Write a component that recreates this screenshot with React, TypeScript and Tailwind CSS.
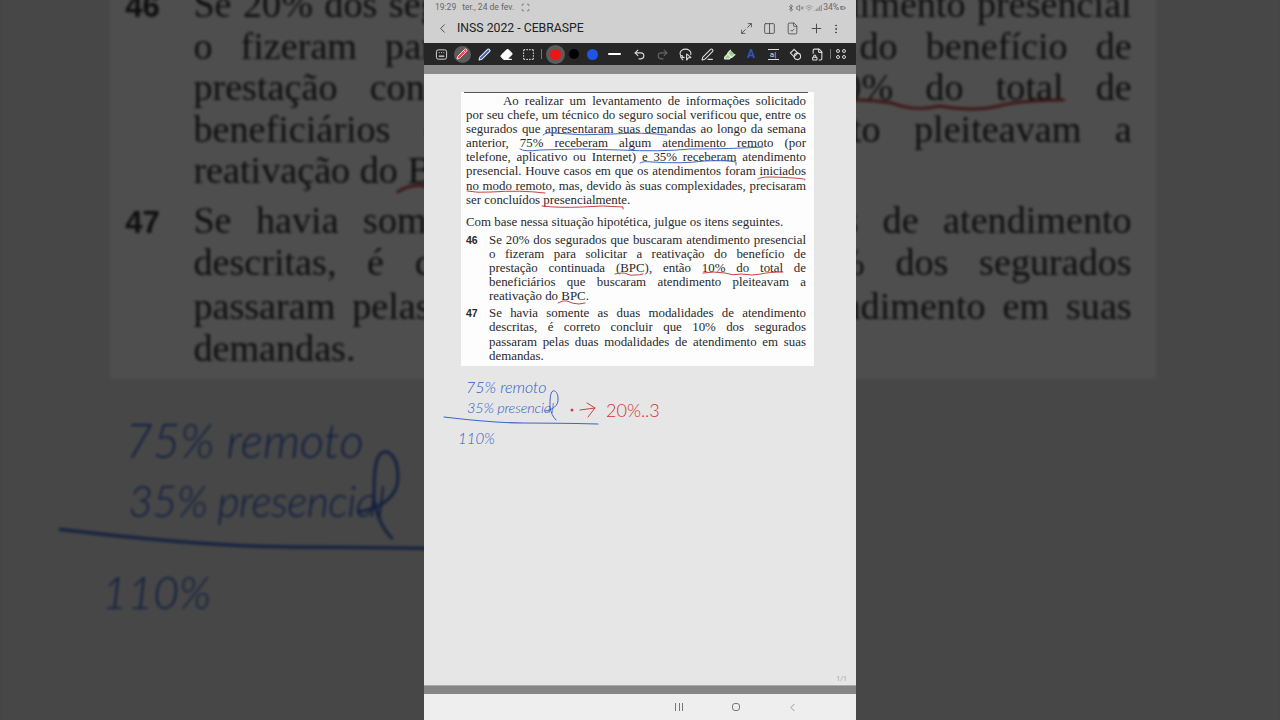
import {
  BatteryMedium,
  Bluetooth,
  ChevronLeft,
  Columns2,
  EllipsisVertical,
  Eraser,
  FileCheck,
  FileLock2,
  Highlighter,
  LassoSelect,
  Maximize2,
  PenLine,
  Pen,
  Pencil,
  Plus,
  Redo2,
  Scan,
  Signal,
  SquareDashed,
  Undo2,
  VolumeX,
  Wifi,
} from "lucide-react";

const serif = "font-['Liberation_Serif',serif]";

const intro = [
  "por seu chefe, um técnico do seguro social verificou que, entre os",
  "segurados que apresentaram suas demandas ao longo da semana",
  "anterior, 75% receberam algum atendimento remoto (por",
  "telefone, aplicativo ou Internet) e 35% receberam atendimento",
  "presencial. Houve casos em que os atendimentos foram iniciados",
  "no modo remoto, mas, devido às suas complexidades, precisaram",
];

const q46 = [
  "Se 20% dos segurados que buscaram atendimento presencial",
  "o fizeram para solicitar a reativação do benefício de",
  "prestação continuada (BPC), então 10% do total de",
  "beneficiários que buscaram atendimento pleiteavam a",
];

const q47 = [
  "Se havia somente as duas modalidades de atendimento",
  "descritas, é correto concluir que 10% dos segurados",
  "passaram pelas duas modalidades de atendimento em suas",
];

function Line({ text }: { text: string }) {
  return <div className="text-justify [text-align-last:justify]">{text}</div>;
}

// the printed question, same block is reused blown up behind the phone
function Sheet() {
  return (
    <div className="relative h-[611px] w-[432px] bg-[#e6e6e6] pl-[37px] pt-[18px]">
      <div className={`h-[274px] w-[353px] bg-[#fdfdfd] pl-[5px] pr-[8px] ${serif} text-[12.9px] leading-[14.1px] text-[#2a2a2a]`}>
        <div className="mx-[-2px] mb-[1px] h-[1px] bg-[#555]" />
        <div className="pl-[37px]">
          <Line text="Ao realizar um levantamento de informações solicitado" />
        </div>
        {intro.map((t) => (
          <Line key={t} text={t} />
        ))}
        <div>ser concluídos presencialmente.</div>
        <div className="mt-[8px]">Com base nessa situação hipotética, julgue os itens seguintes.</div>
        <div className="mt-[4px] flex">
          <b className="w-[23px] font-['Liberation_Sans',sans-serif] text-[10.5px]">46</b>
          <div className="flex-1">
            {q46.map((t) => (
              <Line key={t} text={t} />
            ))}
            <div>reativação do BPC.</div>
          </div>
        </div>
        <div className="mt-[3px] flex">
          <b className="w-[23px] font-['Liberation_Sans',sans-serif] text-[10.5px]">47</b>
          <div className="flex-1">
            {q47.map((t) => (
              <Line key={t} text={t} />
            ))}
            <div>demandas.</div>
          </div>
        </div>
      </div>
      <Ink />
    </div>
  );
}

// pen strokes on the page; the viewBox uses the coordinates of the full screenshot
function Ink() {
  return (
    <>
      <svg
        viewBox="424 74 432 611"
        className="absolute inset-0 h-[611px] w-[432px]"
        fill="none"
        strokeLinecap="round"
        strokeLinejoin="round"
      >
        <g stroke="#3d66c6" strokeWidth="1">
          <path d="M543 135q3-3 10-2 30 3 60 1t54 1" />
          <path d="M520 149q4 3 20 1 40-2 80 0t70-1q40 0 73-2" />
          <path d="M640 163q3-2 12-1 30 2 52-1 24-1 32 1v3" />
          <path d="M444 417q50 6 80 6t74 1" strokeWidth="1.1" />
          <path d="M545 411C552 410 559 406 558 398C558 393 555 390 553 391C550 392 550 400 550 407C551 413 553 417 556 420" />
        </g>
        <g stroke="#c8423f" strokeWidth="1">
          <path d="M758 179q2-2 12-2t24 1 11 2" />
          <path d="M467 191q10 2 24 1 30-2 54 1" />
          <path d="M542 206q16 2 40 1 20-2 41 0v2" />
          <path d="M615 274q8-2 12 0t8 1q5 0 8-1" />
          <path d="M703 273q10-2 22 0 8 3 16 1 12 2 20 0t22-2" />
          <path d="M558 303q5-3 9-2 6 3 12 3l6-1" />
          <path d="M580 410l15-2M587 403l8 5-7 9" />
        </g>
        <circle cx="572" cy="410" r="1.5" fill="#c8423f" />
      </svg>
      <div className="absolute left-[42px] top-[305px] font-['Lato',sans-serif] text-[16px] font-light italic leading-[16px] text-[#2f5cc9]">
        75% remoto
      </div>
      <div className="absolute left-[43px] top-[326px] font-['Lato',sans-serif] text-[14.5px] font-light italic leading-[16px] tracking-[-0.2px] text-[#2f5cc9]">
        35% presencial
      </div>
      <div className="absolute left-[34px] top-[356px] font-['Lato',sans-serif] text-[15px] font-light italic leading-[16px] text-[#2f5cc9]">
        110%
      </div>
      <div className="absolute left-[182px] top-[326px] font-['Lato',sans-serif] text-[18px] font-light leading-[20px] text-[#cf3530]">
        20%..3
      </div>
    </>
  );
}

function ToolIcon({ children }: { children: React.ReactNode }) {
  return <div className="flex h-[22px] w-[22px] items-center justify-center">{children}</div>;
}

function Toolbar() {
  const ic = "h-[13px] w-[13px] text-[#dcdcdc]";
  return (
    <div className="flex h-[22px] items-center bg-[#262626] pl-[6px]">
      <ToolIcon>
        <svg viewBox="0 0 14 14" className="h-[13px] w-[13px]" fill="none" stroke="#dcdcdc">
          <rect x="1.5" y="2" width="11" height="10" rx="2" />
          <path d="M4 8.8h6" strokeWidth="1.4" />
          <path d="M4 5h6" strokeDasharray="1 1.5" />
        </svg>
      </ToolIcon>
      <div className="ml-[-1px]">
        <ToolIcon>
          <div className="flex h-[17px] w-[17px] items-center justify-center rounded-full bg-[#5c5c5c]">
            <Pencil className="h-[12px] w-[12px] fill-[#f04545] text-[#f8dcdc]" />
          </div>
        </ToolIcon>
      </div>
      <ToolIcon>
        <Pen className="h-[13px] w-[13px] fill-[#3f5fb5] text-[#dfe6f5]" />
      </ToolIcon>
      <ToolIcon>
        <Eraser className="h-[13px] w-[13px] fill-white text-white" />
      </ToolIcon>
      <ToolIcon>
        <SquareDashed className={ic} />
      </ToolIcon>
      <div className="ml-[2px] h-[10px] w-[1px] bg-[#777]" />
      <div className="ml-[4px] flex h-[19px] w-[19px] items-center justify-center rounded-full bg-[#5c5c5c]">
        <div className="h-[11px] w-[11px] rounded-full bg-[#f01414]" />
      </div>
      <div className="ml-[1px] flex h-[16px] w-[16px] items-center justify-center">
        <div className="h-[10px] w-[10px] rounded-full bg-black" />
      </div>
      <div className="ml-[2px] flex h-[16px] w-[16px] items-center justify-center">
        <div className="h-[11px] w-[11px] rounded-full bg-[#1f55e6]" />
      </div>
      <div className="ml-[8px] h-[2px] w-[13px] rounded-full bg-white" />
      <div className="ml-[7px] flex w-[45px] items-center justify-between">
        <ToolIcon>
          <Undo2 className={ic} />
        </ToolIcon>
        <ToolIcon>
          <Redo2 className="h-[13px] w-[13px] text-[#666]" />
        </ToolIcon>
      </div>
      <div className="ml-[1px] flex">
        <ToolIcon>
          <LassoSelect className={ic} />
        </ToolIcon>
        <ToolIcon>
          <PenLine className={ic} />
        </ToolIcon>
        <ToolIcon>
          <Highlighter className="h-[13px] w-[13px] fill-[#9fd08a] text-[#eef5e6]" />
        </ToolIcon>
        <ToolIcon>
          <span className="font-['Roboto',sans-serif] text-[12px] font-bold text-[#2f55c8]">A</span>
        </ToolIcon>
        <ToolIcon>
          <span className="w-[11px] border-y border-[#dcdcdc] text-center font-['Roboto',sans-serif] text-[8px] leading-[9px] text-[#dcdcdc]">
            a|
          </span>
        </ToolIcon>
        <ToolIcon>
          <svg viewBox="0 0 14 14" className="h-[13px] w-[13px]" fill="none" stroke="#dcdcdc" strokeWidth="1.2">
            <path d="M5.5 1.5l4 4-4 4-4-4z" />
            <circle cx="9" cy="9" r="3.5" />
          </svg>
        </ToolIcon>
        <ToolIcon>
          <FileLock2 className={ic} />
        </ToolIcon>
      </div>
      <div className="ml-[2px] h-[10px] w-[1px] bg-[#777]" />
      <div className="ml-[3px] flex h-[22px] w-[14px] items-center justify-center">
        <div className="grid grid-cols-2 gap-[2px]">
          <div className="h-[4px] w-[4px] rounded-full border border-[#dcdcdc]" />
          <div className="h-[4px] w-[4px] rounded-full border border-[#dcdcdc]" />
          <div className="h-[4px] w-[4px] rounded-full border border-[#dcdcdc]" />
          <div className="h-[4px] w-[4px] rounded-full border border-[#dcdcdc]" />
        </div>
      </div>
    </div>
  );
}

export default function App() {
  return (
    <div className="relative h-[720px] w-[1280px] overflow-hidden bg-[#454545]">
      {/* blurred backdrop: the same page scaled up */}
      <div className="absolute left-[1px] top-[-486px] origin-top-left scale-[2.96] blur-[0.6px] brightness-[0.31]">
        <Sheet />
      </div>

      <div className="relative flex h-full justify-center">
        <div className="flex h-full w-[432px] flex-col">
          <div className="flex h-[14px] items-center justify-between bg-[#d0d0d0] pl-[11px] pr-[10px] pt-[1px] font-['Roboto',sans-serif] text-[8.5px] text-[#666]">
            <div className="flex items-center gap-[6px]">
              <span>19:29</span>
              <span>ter., 24 de fev.</span>
              <Scan className="ml-[1px] h-[9px] w-[9px] text-[#666]" />
            </div>
            <div className="flex items-center gap-[1px]">
              <Bluetooth className="h-[8px] w-[8px] text-[#555]" />
              <VolumeX className="h-[8px] w-[8px] text-[#555]" />
              <Wifi className="h-[8px] w-[8px] text-[#888]" />
              <Signal className="h-[8px] w-[8px] text-[#666]" />
              <span>34%</span>
              <BatteryMedium className="h-[8px] w-[6px] text-[#555]" />
            </div>
          </div>
          <div className="flex h-[29px] items-center bg-[#d0d0d0] pl-[11px] pr-[14px]">
            <ChevronLeft className="h-[15px] w-[15px] text-[#444]" strokeWidth={1.5} />
            <span className="ml-[7px] flex-1 font-['Roboto',sans-serif] text-[12.25px] text-[#222]">
              INSS 2022 - CEBRASPE
            </span>
            <div className="flex items-center gap-[10px] text-[#444]">
              <Maximize2 className="h-[13px] w-[13px]" strokeWidth={1.5} />
              <Columns2 className="h-[13px] w-[13px]" strokeWidth={1.5} />
              <FileCheck className="h-[13px] w-[13px]" strokeWidth={1.5} />
              <Plus className="h-[15px] w-[15px]" strokeWidth={1.5} />
              <EllipsisVertical className="ml-[-4px] h-[12px] w-[12px]" strokeWidth={2} />
            </div>
          </div>
          <Toolbar />
          <div className="h-[9px] bg-[#8b8b8b]" />
          <div className="relative flex-1 overflow-hidden">
            <Sheet />
            <span className="absolute bottom-[1px] right-[9px] font-['Roboto',sans-serif] text-[7px] text-[#aaa]">1/1</span>
          </div>
          <div className="h-[9px] border-t border-[#aaa] bg-[#858585]" />
          <div className="flex h-[26px] items-center bg-[#eeeeee] pl-[251px] text-[#777]">
            <div className="flex h-[8px] w-[8px] justify-between">
              <div className="w-[1px] bg-[#777]" />
              <div className="w-[1px] bg-[#777]" />
              <div className="w-[1px] bg-[#777]" />
            </div>
            <div className="ml-[49px] h-[8px] w-[8px] rounded-[3px] border border-[#777]" />
            <ChevronLeft className="ml-[46px] h-[13px] w-[13px]" strokeWidth={1.3} />
          </div>
        </div>
      </div>
    </div>
  );
}
